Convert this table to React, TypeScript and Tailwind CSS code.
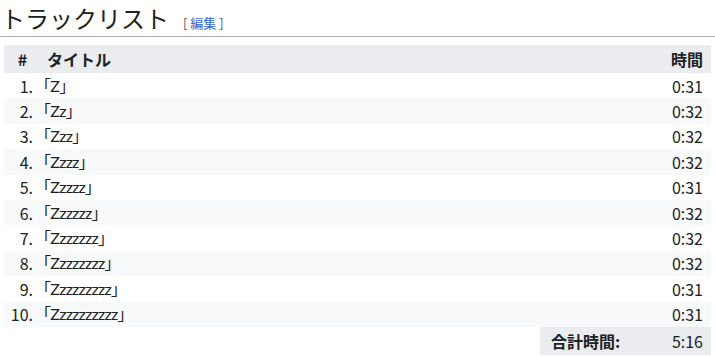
const TRACKS: { title: string; time: string }[] = [
    { title: "Z", time: "0:31" },
    { title: "Zz", time: "0:32" },
    { title: "Zzz", time: "0:32" },
    { title: "Zzzz", time: "0:32" },
    { title: "Zzzzz", time: "0:31" },
    { title: "Zzzzzz", time: "0:32" },
    { title: "Zzzzzzz", time: "0:32" },
    { title: "Zzzzzzzz", time: "0:32" },
    { title: "Zzzzzzzzz", time: "0:31" },
    { title: "Zzzzzzzzzz", time: "0:31" },
];

export default function App() {
    return (
        <div className="w-[715px] h-[356px] overflow-hidden bg-white text-[#202122] font-['Noto_Sans_CJK_JP','Noto_Sans',sans-serif]">

            {/* 見出し */}
            <div className="flex items-baseline gap-[14px] pl-[1px] h-[37px] border-b border-[#a2a9b1]">
                <h2 className="text-[24px] leading-[36px] font-normal">トラックリスト</h2>
                <span className="text-[13px] text-[#54595d]">
                    [ <span className="text-[#3366cc]">編集</span> ]
                </span>
            </div>

            {/* トラック表 */}
            <div className="mx-[4px] mt-[8px] text-[16px]">
                <div className="grid grid-cols-[37px_1fr_auto] items-center h-[28px] bg-[#eaecf0] font-bold">
                    <span className="text-center">#</span>
                    <span className="pl-[6px]">タイトル</span>
                    <span className="pr-[8px]">時間</span>
                </div>
                {TRACKS.map((t, i) => (
                    <div key={i}
                         className={`grid grid-cols-[29px_1fr_auto] items-center h-[25.4px] ${i % 2 === 1 ? "bg-[#f8f9fa]" : "bg-white"}`}>
                        <span className="text-right">{i + 1}.</span>
                        <span className="pl-[2px] tracking-[-0.75px] font-['Lato','Noto_Sans_CJK_JP',sans-serif]">「{t.title}」</span>
                        <span className="pr-[8px]">{t.time}</span>
                    </div>
                ))}
                <div className="flex justify-end">
                    <div className="flex justify-between items-center w-[171px] h-[28px] bg-[#eaecf0] px-[8px] pl-[11px]">
                        <span className="font-bold">合計時間:</span>
                        <span>5:16</span>
                    </div>
                </div>
            </div>
        </div>
    );
}
